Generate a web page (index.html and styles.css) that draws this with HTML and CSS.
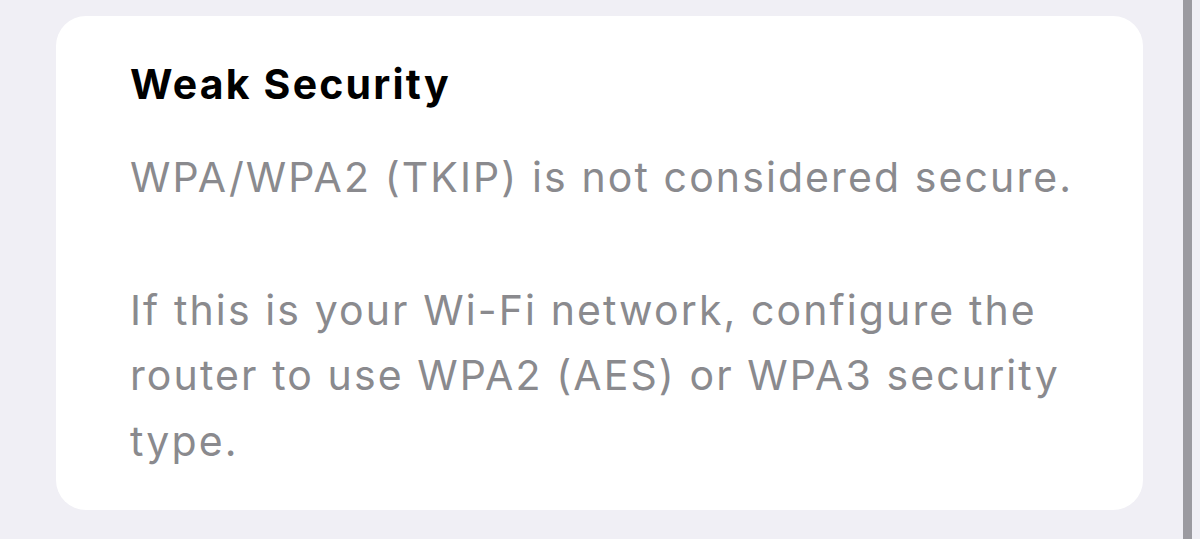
FILE: index.html
```html
<!DOCTYPE html>
<html>
<head>
<meta charset="utf-8">
<link rel="stylesheet" href="styles.css">
</head>
<body>
<div class="page">
  <div class="card">
    <h1 class="title">Weak Security</h1>
    <p class="text">WPA/WPA2 (TKIP) is not considered secure.</p>
    <p class="text">If this is your Wi-Fi network, configure the router to use WPA2 (AES) or WPA3 security type.</p>
  </div>
  <div class="scrollbar"></div>
</div>
</body>
</html>
```
FILE: styles.css
```css
html, body {
  margin: 0;
  padding: 0;
  height: 100%;
  background: #f0eff5;
}
.page {
  display: flex;
  height: 539px;
  padding-left: 56px;
  box-sizing: border-box;
  font-family: Inter, "Noto Sans", sans-serif;
}
.card {
  margin-top: 16px;
  width: 1087px;
  height: 494px;
  background: #ffffff;
  border-radius: 30px;
  box-sizing: border-box;
  padding: 44px 64px 0 74px;
}
.title {
  margin: 0;
  font-size: 41px;
  line-height: 48px;
  font-weight: 700;
  color: #000;
  letter-spacing: 2.2px;
}
.text {
  margin: 37px 0 0 0;
  font-size: 41px;
  line-height: 65.5px;
  font-weight: 400;
  color: #8a8a8e;
  letter-spacing: 2.1px;
}
.text + .text {
  margin-top: 67px;
}
.scrollbar {
  margin-left: 40px;
  width: 9px;
  height: 539px;
  background: #9b9aa0;
}
```
